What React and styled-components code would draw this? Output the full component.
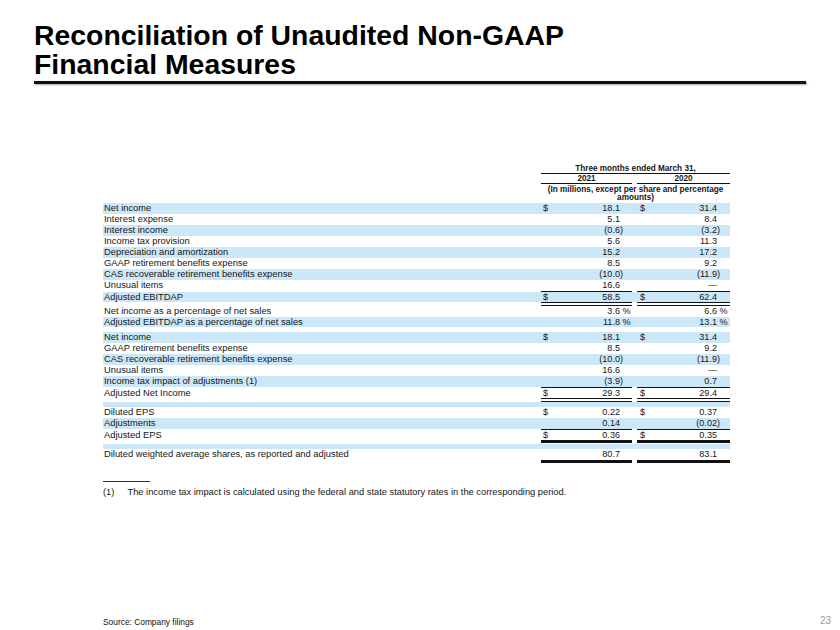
import React from 'react'
import styled, { createGlobalStyle } from 'styled-components'

const GlobalStyle = createGlobalStyle`
    body {
        margin: 0;
        background: #ffffff;
    }
`

const COLS = '438px 91px 5px 93px'
const BAND = '#cce8f8'
const INK = '#161616'

const Slide = styled.div`
    width: 840px;
    height: 630px;
    display: flex;
    flex-direction: column;
    overflow: hidden;
    font-family: 'Liberation Sans', Arial, sans-serif;
    color: ${INK};
`

const TitleBlock = styled.div`
    margin: 21px 34px 0 34px;
`

const Title = styled.h1`
    margin: 0;
    font-size: 28.4px;
    line-height: 29px;
    font-weight: bold;
    color: #000;
`

const TitleRule = styled.div`
    height: 3px;
    margin-top: 2px;
    background: #111;
    box-shadow: 1px 1px 2px rgba(0, 0, 0, 0.35);
`

const Table = styled.div`
    width: 627px;
    margin: 79.5px 0 0 103px;
`

const HeadRow = styled.div`
    display: grid;
    grid-template-columns: ${COLS};
    font-size: 8.2px;
    font-weight: bold;
    line-height: ${(p) => p.$lh}px;
    margin-top: ${(p) => p.$mt || 0}px;
`

const HeadCell = styled.div`
    grid-column: ${(p) => p.$col};
    text-align: center;
    border-bottom: ${(p) => (p.$rule ? `${p.$rule}px solid #111` : 'none')};
`

const Row = styled.div`
    display: grid;
    grid-template-columns: ${COLS};
    height: ${(p) => p.$h}px;
    line-height: ${(p) => p.$h}px;
    background: ${(p) => (p.$band ? BAND : 'transparent')};
    white-space: nowrap;
`

const Label = styled.div`
    font-size: 9.35px;
    padding-left: 1px;
`

const Val = styled.div`
    grid-column: ${(p) => p.$col};
    display: grid;
    grid-template-columns: auto 1fr ${(p) => p.$tail}px;
    padding-left: ${(p) => p.$pad}px;
    font-size: 9.1px;
`

const Num = styled.span`
    text-align: right;
`

const Tail = styled.span`
    white-space: pre;
`

const Rule = styled.div`
    display: grid;
    grid-template-columns: ${COLS};
    height: ${(p) => p.$h}px;
`

const RuleSeg = styled.div`
    grid-column: ${(p) => p.$col};
    box-sizing: border-box;
    ${(p) =>
        p.$kind === 'double'
            ? `border-top: 1.5px solid #111; border-bottom: 1.5px solid #111;`
            : p.$kind === 'thick'
            ? `border-top: 3.5px solid #111;`
            : `border-top: 1px solid #111;`}
`

const Gap = styled.div`
    height: ${(p) => p.$h}px;
`

const FootRule = styled.div`
    width: 47px;
    height: 1px;
    background: #333;
    margin: 17px 0 0 103px;
`

const Footnote = styled.div`
    display: flex;
    margin: 5px 0 0 103px;
    font-size: 9.3px;
    line-height: 11px;
`

const FootMark = styled.span`
    width: 24.5px;
`

const Footer = styled.div`
    margin-top: auto;
    display: flex;
    justify-content: space-between;
    align-items: flex-end;
    padding: 0 9px 3px 103px;
`

const Source = styled.span`
    font-size: 8.4px;
    line-height: 10px;
    color: #111;
`

const PageNum = styled.span`
    font-size: 10px;
    line-height: 12px;
    color: #9a9a9a;
`

const RULE_H = { single: 1, double: 4, thick: 4 }

const lines = [
    { t: 'row', band: true, label: 'Net income', v: ['$', '18.1', '$', '31.4'] },
    { t: 'row', label: 'Interest expense', v: ['', '5.1', '', '8.4'] },
    { t: 'row', band: true, label: 'Interest income', v: ['', '(0.6)', '', '(3.2)'] },
    { t: 'row', label: 'Income tax provision', v: ['', '5.6', '', '11.3'] },
    { t: 'row', band: true, label: 'Depreciation and amortization', v: ['', '15.2', '', '17.2'] },
    { t: 'row', label: 'GAAP retirement benefits expense', v: ['', '8.5', '', '9.2'] },
    { t: 'row', band: true, label: 'CAS recoverable retirement benefits expense', v: ['', '(10.0)', '', '(11.9)'] },
    { t: 'row', label: 'Unusual items', v: ['', '16.6', '', '—'] },
    { t: 'rule', kind: 'single' },
    { t: 'row', band: true, h: 10, label: 'Adjusted EBITDAP', v: ['$', '58.5', '$', '62.4'] },
    { t: 'rule', kind: 'double' },
    { t: 'row', label: 'Net income as a percentage of net sales', v: ['', '3.6 %', '', '6.6 %'] },
    { t: 'row', band: true, h: 10, label: 'Adjusted EBITDAP as a percentage of net sales', v: ['', '11.8 %', '', '13.1 %'] },
    { t: 'gap', h: 5 },
    { t: 'row', band: true, label: 'Net income', v: ['$', '18.1', '$', '31.4'] },
    { t: 'row', label: 'GAAP retirement benefits expense', v: ['', '8.5', '', '9.2'] },
    { t: 'row', band: true, label: 'CAS recoverable retirement benefits expense', v: ['', '(10.0)', '', '(11.9)'] },
    { t: 'row', label: 'Unusual items', v: ['', '16.6', '', '—'] },
    { t: 'row', band: true, label: 'Income tax impact of adjustments (1)', v: ['', '(3.9)', '', '0.7'] },
    { t: 'rule', kind: 'single' },
    { t: 'row', h: 10, label: 'Adjusted Net Income', v: ['$', '29.3', '$', '29.4'] },
    { t: 'rule', kind: 'double' },
    { t: 'row', band: true, h: 5, label: '', v: ['', '', '', ''] },
    { t: 'row', label: 'Diluted EPS', v: ['$', '0.22', '$', '0.37'] },
    { t: 'row', band: true, label: 'Adjustments', v: ['', '0.14', '', '(0.02)'] },
    { t: 'rule', kind: 'single' },
    { t: 'row', h: 10, label: 'Adjusted EPS', v: ['$', '0.36', '$', '0.35'] },
    { t: 'rule', kind: 'thick' },
    { t: 'row', band: true, h: 5, label: '', v: ['', '', '', ''] },
    { t: 'row', label: 'Diluted weighted average shares, as reported and adjusted', v: ['', '80.7', '', '83.1'] },
    { t: 'rule', kind: 'thick' },
]

function splitValue(value) {
    if (value.endsWith(')')) return [value.slice(0, -1), ')']
    if (value.endsWith(' %')) return [value.slice(0, -2), ' %']
    return [value, '']
}

function Amount({ col, pad, tail, sign, value }) {
    const [num, end] = splitValue(value)
    return (
        <Val $col={col} $pad={pad} $tail={tail}>
            <span>{sign}</span>
            <Num>{num}</Num>
            <Tail>{end}</Tail>
        </Val>
    )
}

function Line({ line }) {
    if (line.t === 'gap') return <Gap $h={line.h} />
    if (line.t === 'rule') {
        return (
            <Rule $h={RULE_H[line.kind]}>
                <RuleSeg $col="2" $kind={line.kind} />
                <RuleSeg $col="4" $kind={line.kind} />
            </Rule>
        )
    }
    const [s1, v1, s2, v2] = line.v
    return (
        <Row $h={line.h || 11} $band={line.band}>
            <Label>{line.label}</Label>
            <Amount col="2" pad={2} tail={12} sign={s1} value={v1} />
            <Amount col="4" pad={3} tail={13} sign={s2} value={v2} />
        </Row>
    )
}

export default function App() {
    return (
        <Slide>
            <GlobalStyle />
            <TitleBlock>
                <Title>
                    Reconciliation of Unaudited Non-GAAP
                    <br />
                    Financial Measures
                </Title>
                <TitleRule />
            </TitleBlock>

            <Table>
                <HeadRow $lh={9.5}>
                    <HeadCell $col="2 / 5" $rule={1.5}>
                        Three months ended March 31,
                    </HeadCell>
                </HeadRow>
                <HeadRow $lh={9}>
                    <HeadCell $col="2" $rule={1}>2021</HeadCell>
                    <HeadCell $col="4" $rule={1}>2020</HeadCell>
                </HeadRow>
                <HeadRow $lh={8.5} $mt={1.5}>
                    <HeadCell $col="2 / 5">
                        (In millions, except per share and percentage amounts)
                    </HeadCell>
                </HeadRow>
                <Gap $h={0.5} />
                {lines.map((line, i) => (
                    <Line key={i} line={line} />
                ))}
            </Table>

            <FootRule />
            <Footnote>
                <FootMark>(1)</FootMark>
                <span>
                    The income tax impact is calculated using the federal and state statutory rates in the corresponding period.
                </span>
            </Footnote>

            <Footer>
                <Source>Source: Company filings</Source>
                <PageNum>23</PageNum>
            </Footer>
        </Slide>
    )
}
